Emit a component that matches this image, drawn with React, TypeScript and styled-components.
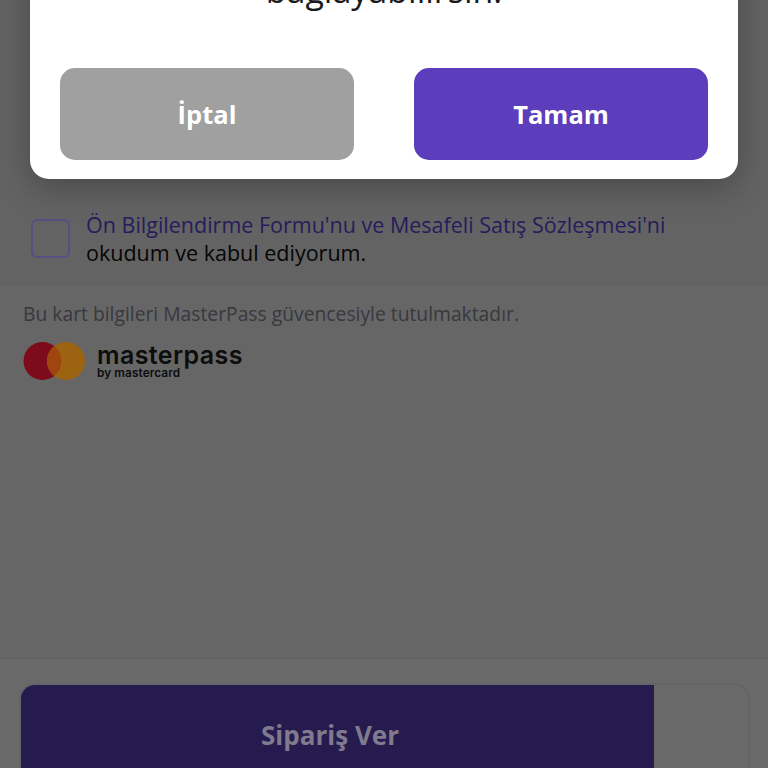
import React from "react";
import styled, { createGlobalStyle } from "styled-components";

const GlobalStyle = createGlobalStyle`
  html, body {
    margin: 0;
    padding: 0;
    background: #676767;
  }
  * {
    box-sizing: border-box;
  }
`;

const Screen = styled.div`
  position: relative;
  width: 768px;
  height: 768px;
  overflow: hidden;
  display: flex;
  flex-direction: column;
  background: #666666;
  font-family: "Open Sans", "Liberation Sans", sans-serif;
`;

const Agreement = styled.div`
  height: 286px;
  padding: 211px 30px 0 31px;
  display: flex;
  gap: 16px;
  background: #636363;
`;

const Checkbox = styled.div`
  width: 39px;
  height: 39px;
  margin-top: 8px;
  flex: none;
  border: 2px solid #565080;
  border-radius: 6px;
`;

const AgreementText = styled.div`
  font-size: 21.5px;
  line-height: 28px;
  font-weight: 500;
  color: #060606;
  white-space: nowrap;
`;

const AgreementLink = styled.span`
  color: #261c5c;
`;

const CardInfo = styled.div`
  flex: 1;
  padding: 15px 23px 0;
  background: #666666;
  border-bottom: 1px solid #616161;
`;

const CardNote = styled.div`
  font-size: 19.3px;
  line-height: 26px;
  font-weight: 500;
  color: #38383e;
`;

const Brand = styled.div`
  display: flex;
  align-items: center;
  gap: 11px;
  margin-top: 14px;
`;

const BrandName = styled.div`
  display: flex;
  flex-direction: column;
  color: #0d0d0d;
  font-family: "Inter", "Liberation Sans", sans-serif;
`;

const BrandTitle = styled.span`
  font-size: 25px;
  line-height: 23px;
  font-weight: 600;
  letter-spacing: 0.4px;
`;

const BrandSub = styled.span`
  font-size: 11.8px;
  line-height: 12px;
  font-weight: 600;
  letter-spacing: 0.1px;
`;

const Footer = styled.div`
  height: 109px;
  padding: 24px 18px 0 19px;
  background: #696969;
`;

const OrderTrack = styled.div`
  height: 110px;
  border: 2px solid #646369;
  border-bottom: none;
  border-radius: 16px 16px 0 0;
  overflow: hidden;
`;

const OrderFill = styled.div`
  width: 633px;
  height: 100%;
  padding: 25px 15px 0 0;
  background: #261b4f;
  color: #7f7a8e;
  font-size: 26px;
  line-height: 50px;
  font-weight: 700;
  text-align: center;
`;

const Modal = styled.div`
  position: absolute;
  left: 30px;
  top: -60px;
  width: 708px;
  height: 239px;
  padding: 0 30px 19px;
  display: flex;
  flex-direction: column;
  justify-content: flex-end;
  background: #ffffff;
  border-radius: 0 0 19px 19px;
  box-shadow: 0 8px 34px rgba(0, 0, 0, 0.28);
`;

const ModalMessage = styled.div`
  position: absolute;
  left: 0;
  right: 0;
  top: 30px;
  font-size: 34px;
  line-height: 40px;
  color: #1a1a1a;
  text-align: center;
`;

const ModalActions = styled.div`
  display: flex;
  justify-content: space-between;
`;

const ModalButton = styled.div<{ $primary?: boolean }>`
  width: 294px;
  height: 92px;
  display: flex;
  align-items: center;
  justify-content: center;
  border-radius: 15px;
  background: ${(props) => (props.$primary ? "#5c3dbb" : "#a0a0a0")};
  color: #ffffff;
  font-size: 25.5px;
  font-weight: 700;
`;

function MasterpassMark() {
  return (
    <svg width="63" height="40" viewBox="0 0 63 40">
      <circle cx="19.5" cy="20" r="19" fill="#7d0b1a" />
      <circle cx="43" cy="20" r="19" fill="#9c6410" />
      <path d="M31.2 5.1a19 19 0 0 1 0 29.8a19 19 0 0 1 0-29.8z" fill="#a0450f" />
    </svg>
  );
}

export default function App() {
  return (
    <Screen>
      <GlobalStyle />
      <Agreement>
        <Checkbox />
        <AgreementText>
          <AgreementLink>Ön Bilgilendirme Formu'nu ve Mesafeli Satış Sözleşmesi'ni</AgreementLink>
          <br />
          okudum ve kabul ediyorum.
        </AgreementText>
      </Agreement>
      <CardInfo>
        <CardNote>Bu kart bilgileri MasterPass güvencesiyle tutulmaktadır.</CardNote>
        <Brand>
          <MasterpassMark />
          <BrandName>
            <BrandTitle>masterpass</BrandTitle>
            <BrandSub>by mastercard</BrandSub>
          </BrandName>
        </Brand>
      </CardInfo>
      <Footer>
        <OrderTrack>
          <OrderFill>Sipariş Ver</OrderFill>
        </OrderTrack>
      </Footer>
      <Modal>
        <ModalMessage>bağlayabilirsin.</ModalMessage>
        <ModalActions>
          <ModalButton>İptal</ModalButton>
          <ModalButton $primary>Tamam</ModalButton>
        </ModalActions>
      </Modal>
    </Screen>
  );
}
